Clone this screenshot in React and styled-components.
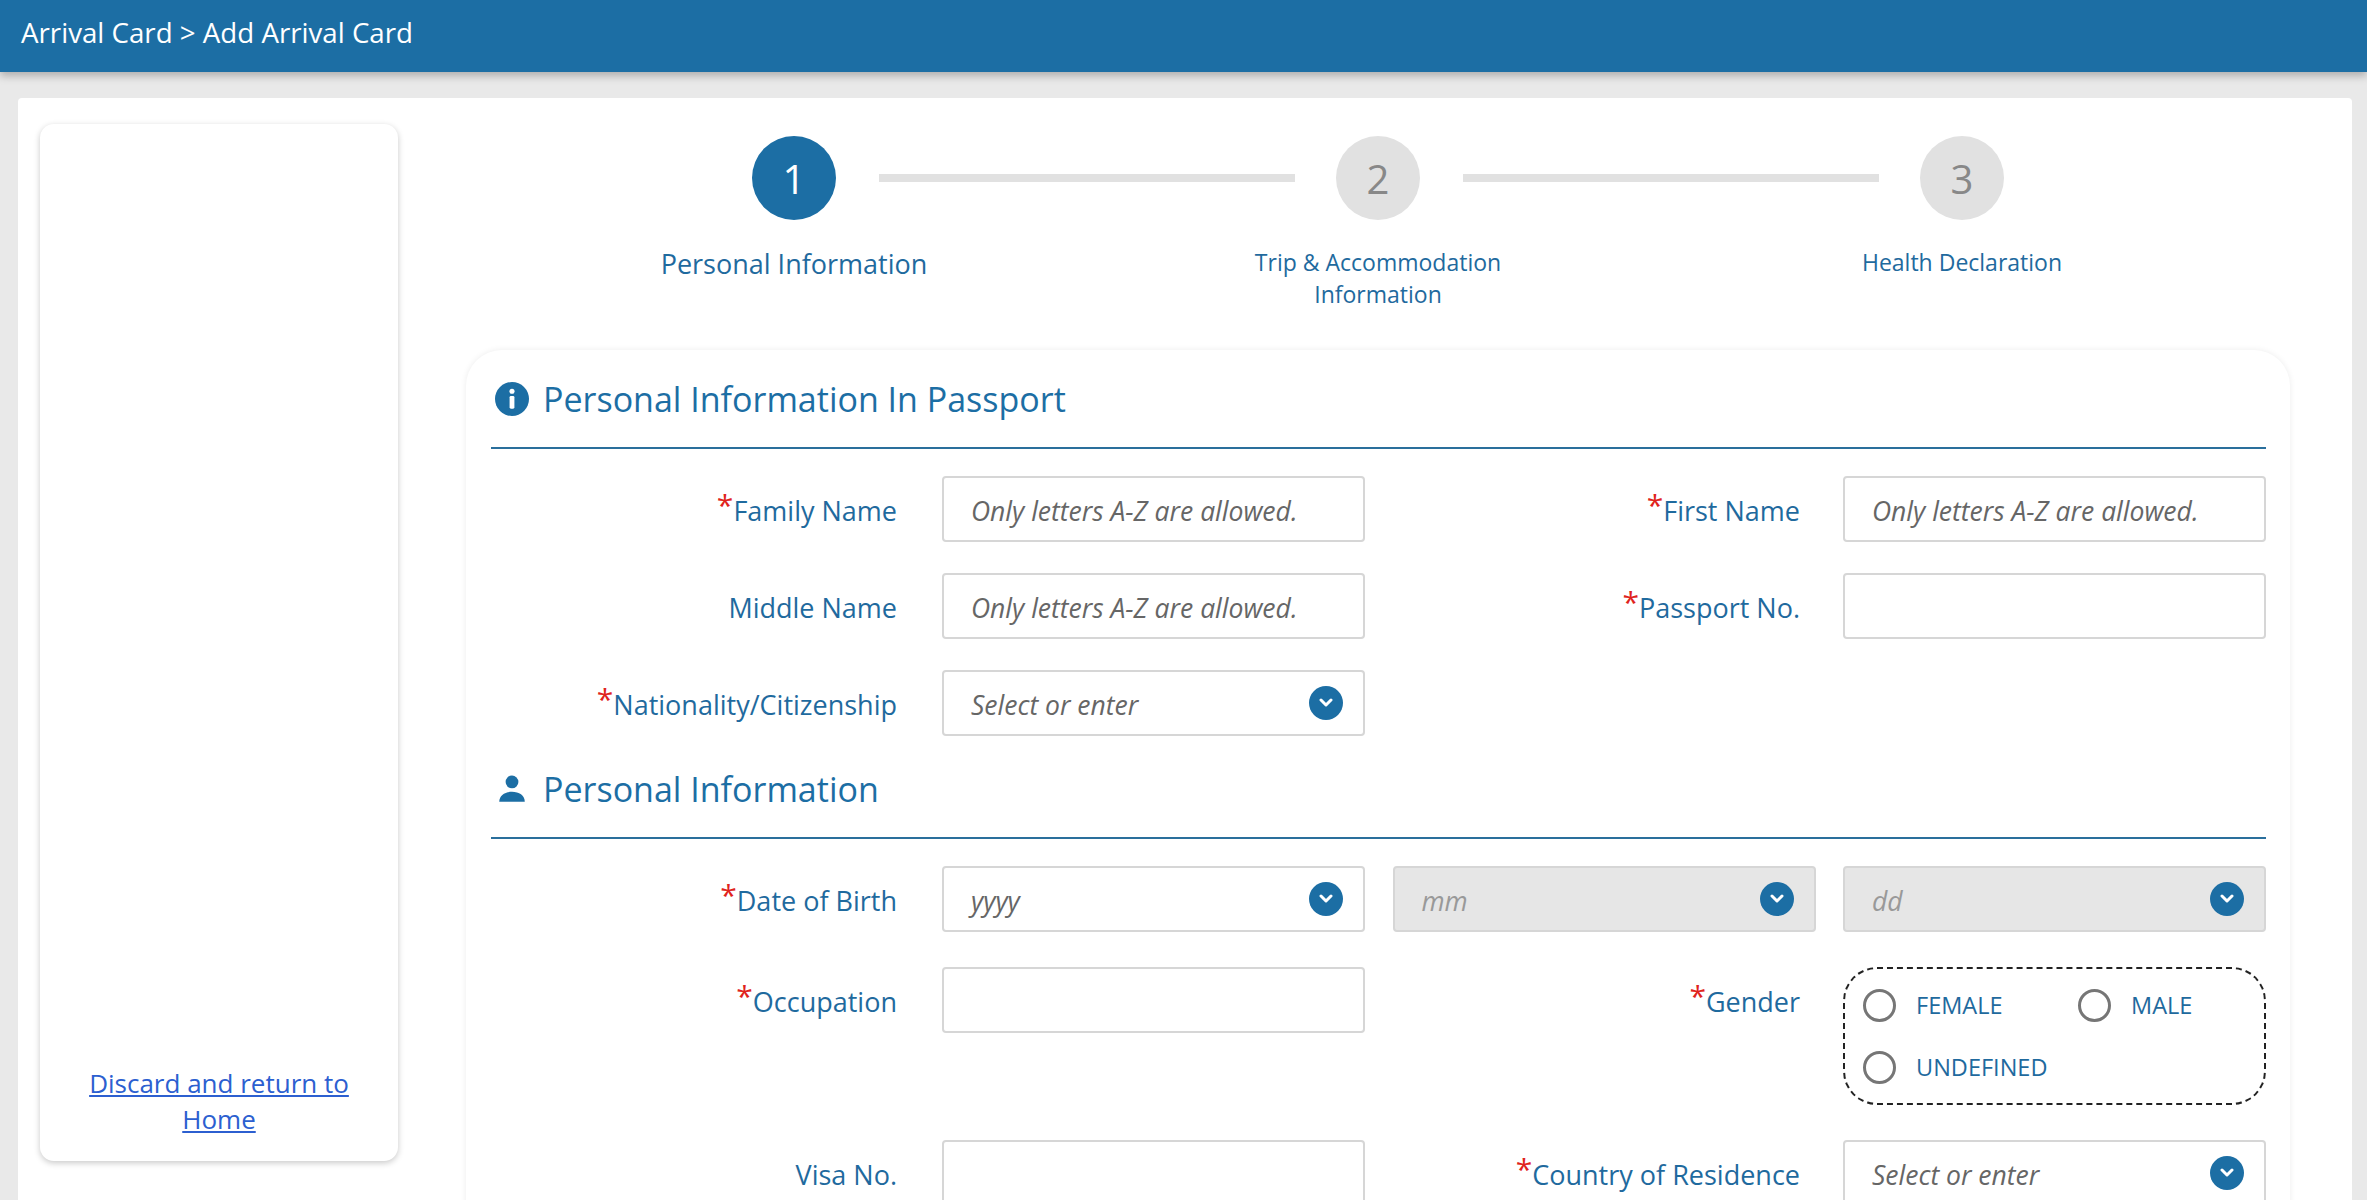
import React from "react";
import styled, { createGlobalStyle } from "styled-components";

const Global = createGlobalStyle`
  html, body { margin: 0; padding: 0; background: #e9e9e9; font-family: "Open Sans", "Noto Sans", sans-serif; }
  * { box-sizing: border-box; }
`;
const BLUE = "#1c6ea4";
const TEXT = "#1f6a9e";

const Header = styled.header`
  height: 72px; background: ${BLUE}; color: #fff; font-size: 27.7px;
  display: flex; align-items: center; padding: 0 21px 8px;
  box-shadow: 0 4px 8px rgba(0,0,0,0.25); position: relative;
`;
const Page = styled.div`padding: 26px 15px 0 18px;`;
const Panel = styled.div`
  background: #fff; border-radius: 4px; display: flex; align-items: flex-start;
  padding: 26px 62px 0 22px; min-height: 1110px;
`;
const Sidebar = styled.aside`
  width: 358px; height: 1037px; border-radius: 14px; flex: none;
  box-shadow: 0 2px 6px rgba(0,0,0,0.22); display: flex; flex-direction: column;
  justify-content: flex-end; align-items: center; padding: 0 30px 24px;
`;
const Link = styled.a`
  color: #2c5fd0; text-decoration: underline; font-size: 26px; line-height: 36px; text-align: center; cursor: pointer;
`;
const Main = styled.main`flex: 1; margin-left: 68px; padding-top: 12px;`;
const StepRow = styled.div`display: flex; align-items: center; padding-left: 286px; width: 1824px;`;
const Circle = styled.div`
  width: 84px; height: 84px; border-radius: 50%; flex: none;
  background: ${p => (p.$active ? BLUE : "#e1e1e1")};
  color: ${p => (p.$active ? "#fff" : "#888")};
  font-size: 40px; display: flex; align-items: center; justify-content: center;
`;
const Line = styled.div`width: 416px; height: 8px; background: #e1e1e1; margin: 0 41px 0 43px;`;
const StepLabels = styled.div`
  display: grid; grid-template-columns: repeat(3, 584px); padding-left: 36px; margin-top: 28px;
`;
const StepLabel = styled.div`
  text-align: center; color: ${TEXT}; font-size: ${p => (p.$active ? "27px" : "23px")};
  line-height: 32px; margin-top: ${p => (p.$active ? "0" : "-2px")};
`;
const FormCard = styled.section`
  margin-top: 40px; border-radius: 36px; padding: 20px 24px 40px 25px;
  box-shadow: 0 0 6px rgba(0,0,0,0.08); width: 1824px;
`;
const SectionTitle = styled.h2`
  margin: ${p => p.$mt || "0"} 0 27px; display: flex; align-items: center; gap: 14px; color: ${BLUE};
  font-size: 34px; font-weight: 500; height: 58px; padding-left: 4px;
  border-bottom: 2px solid #2a6f9c; padding-bottom: 19px; box-sizing: content-box;
`;
const Grid = styled.div`
  display: grid; grid-template-columns: 451px 423px 478px 423px; row-gap: ${p => p.$gap || "31px"}; align-items: start;
`;
const Label = styled.label`
  color: ${TEXT}; font-size: 27px; text-align: right; padding-right: ${p => p.$pr || "45px"};
  height: 66px; display: flex; align-items: center; justify-content: flex-end; padding-top: 2px;
`;
const Star = styled.span`color: #e0231c; font-size: 30px; align-self: flex-start; margin-top: 6px;`;
const Input = styled.div`
  height: 66px; border: 2px solid #d6d6d6; border-radius: 4px;
  background: ${p => (p.$disabled ? "#e6e6e6" : "#fff")};
  display: flex; align-items: center; justify-content: space-between; padding: 4px 20px 0 27px;
  color: ${p => (p.$disabled ? "#999" : "#666")}; font-style: italic; font-size: 26.5px;
`;
const DobGroup = styled.div`grid-column: 2 / 5; display: grid; grid-template-columns: repeat(3, 423px); justify-content: space-between;`;
const ChevronBtn = styled.span`
  width: 34px; height: 34px; border-radius: 50%; background: ${BLUE}; display: flex;
  align-items: center; justify-content: center; margin-top: -4px; flex: none;
`;
const Spacer = styled.div`grid-column: span 2;`;
const RadioBox = styled.div`
  border: 2px dashed #222; border-radius: 34px; height: 138px; padding: 14px 18px;
  display: grid; grid-template-columns: 215px 1fr; row-gap: 18px; align-content: start;
`;
const Radio = styled.div`display: flex; align-items: center; gap: 20px; color: ${TEXT}; font-size: 23.5px; height: 44px;`;
const Dot = styled.span`width: 33px; height: 33px; border: 3px solid #767676; border-radius: 50%; flex: none;`;

const Chevron = () => (
  <ChevronBtn>
    <svg width="14" height="10" viewBox="0 0 14 10"><path d="M2 2l5 5 5-5" stroke="#fff" strokeWidth="3" fill="none" strokeLinecap="round" strokeLinejoin="round" /></svg>
  </ChevronBtn>
);
const Field = ({ label, req, pr }) => (
  <Label $pr={pr}>{req && <Star>*</Star>}{label}</Label>
);

export default function App() {
  return (
    <>
      <Global />
      <Header>Arrival Card &gt; Add Arrival Card</Header>
      <Page>
        <Panel>
          <Sidebar><Link>Discard and return to Home</Link></Sidebar>
          <Main>
            <StepRow>
              <Circle $active>1</Circle><Line /><Circle>2</Circle><Line /><Circle>3</Circle>
            </StepRow>
            <StepLabels>
              <StepLabel $active>Personal Information</StepLabel>
              <StepLabel>Trip &amp; Accommodation<br />Information</StepLabel>
              <StepLabel>Health Declaration</StepLabel>
            </StepLabels>
            <FormCard>
              <SectionTitle>
                <svg width="34" height="34" viewBox="0 0 24 24"><circle cx="12" cy="12" r="12" fill={BLUE} /><circle cx="12" cy="6.5" r="1.8" fill="#fff" /><rect x="10.3" y="9.8" width="3.4" height="9" rx="1" fill="#fff" /></svg>
                Personal Information In Passport
              </SectionTitle>
              <Grid>
                <Field label="Family Name" req />
                <Input>Only letters A-Z are allowed.</Input>
                <Field label="First Name" req pr="43px" />
                <Input>Only letters A-Z are allowed.</Input>
                <Field label="Middle Name" />
                <Input>Only letters A-Z are allowed.</Input>
                <Field label="Passport No." req pr="43px" />
                <Input />
                <Field label="Nationality/Citizenship" req />
                <Input>Select or enter<Chevron /></Input>
                <Spacer />
              </Grid>
              <SectionTitle $mt="24px">
                <svg width="34" height="34" viewBox="0 0 24 24"><circle cx="12" cy="7" r="4.5" fill={BLUE} /><path d="M3 21c0-4.5 4-7 9-7s9 2.5 9 7z" fill={BLUE} /></svg>
                Personal Information
              </SectionTitle>
              <Grid $gap="35px">
                <Field label="Date of Birth" req />
                <DobGroup>
                  <Input>yyyy<Chevron /></Input>
                  <Input $disabled>mm<Chevron /></Input>
                  <Input $disabled>dd<Chevron /></Input>
                </DobGroup>
                <Field label="Occupation" req />
                <Input />
                <Field label="Gender" req pr="43px" />
                <RadioBox>
                  <Radio><Dot />FEMALE</Radio>
                  <Radio><Dot />MALE</Radio>
                  <Radio><Dot />UNDEFINED</Radio>
                </RadioBox>
                <Field label="Visa No." />
                <Input />
                <Field label="Country of Residence" req pr="43px" />
                <Input>Select or enter<Chevron /></Input>
              </Grid>
            </FormCard>
          </Main>
        </Panel>
      </Page>
    </>
  );
}
